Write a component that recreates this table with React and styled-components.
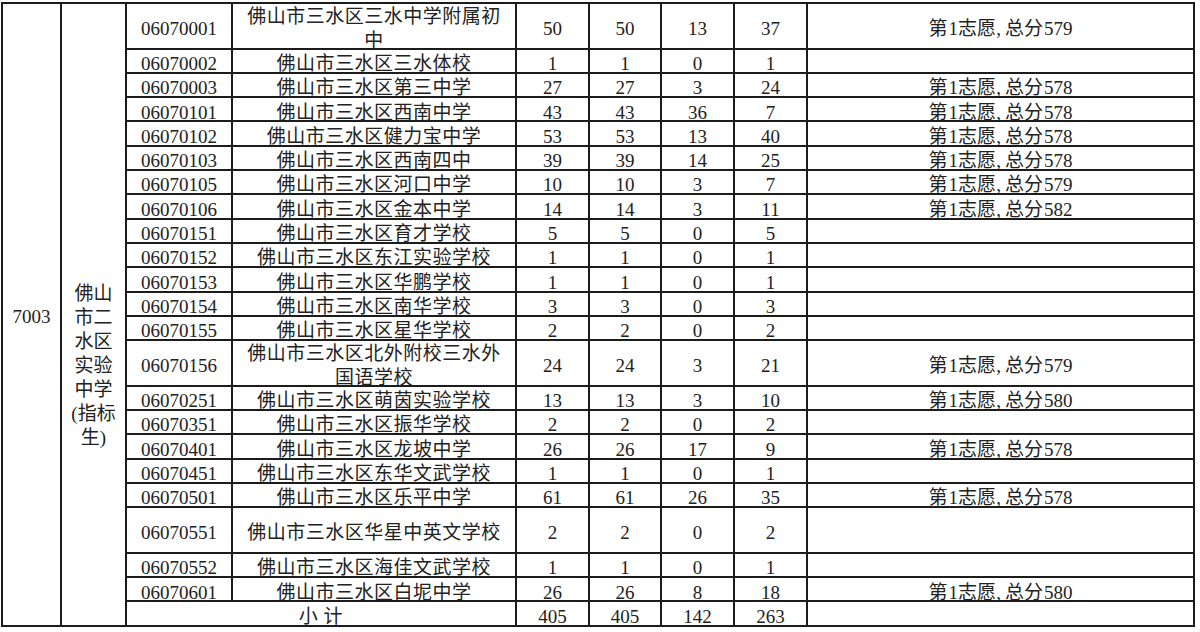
import React from "react";
import styled, { createGlobalStyle } from "styled-components";

const Global = createGlobalStyle`
  html, body { margin: 0; padding: 0; background: #ffffff; }
  body {
    font-family: "Liberation Serif", "Noto Sans CJK SC", serif;
    color: #222;
  }
`;

const SINGLE = 22.31;
const DOUBLE = 43.6;

const rows = [
  ["06070001", ["佛山市三水区三水中学附属初", "中"], 50, 50, 13, 37, "第1志愿,总分579", true],
  ["06070002", ["佛山市三水区三水体校"], 1, 1, 0, 1, ""],
  ["06070003", ["佛山市三水区第三中学"], 27, 27, 3, 24, "第1志愿,总分578"],
  ["06070101", ["佛山市三水区西南中学"], 43, 43, 36, 7, "第1志愿,总分578"],
  ["06070102", ["佛山市三水区健力宝中学"], 53, 53, 13, 40, "第1志愿,总分578"],
  ["06070103", ["佛山市三水区西南四中"], 39, 39, 14, 25, "第1志愿,总分578"],
  ["06070105", ["佛山市三水区河口中学"], 10, 10, 3, 7, "第1志愿,总分579"],
  ["06070106", ["佛山市三水区金本中学"], 14, 14, 3, 11, "第1志愿,总分582"],
  ["06070151", ["佛山市三水区育才学校"], 5, 5, 0, 5, ""],
  ["06070152", ["佛山市三水区东江实验学校"], 1, 1, 0, 1, ""],
  ["06070153", ["佛山市三水区华鹏学校"], 1, 1, 0, 1, ""],
  ["06070154", ["佛山市三水区南华学校"], 3, 3, 0, 3, ""],
  ["06070155", ["佛山市三水区星华学校"], 2, 2, 0, 2, ""],
  ["06070156", ["佛山市三水区北外附校三水外", "国语学校"], 24, 24, 3, 21, "第1志愿,总分579", true],
  ["06070251", ["佛山市三水区萌茵实验学校"], 13, 13, 3, 10, "第1志愿,总分580"],
  ["06070351", ["佛山市三水区振华学校"], 2, 2, 0, 2, ""],
  ["06070401", ["佛山市三水区龙坡中学"], 26, 26, 17, 9, "第1志愿,总分578"],
  ["06070451", ["佛山市三水区东华文武学校"], 1, 1, 0, 1, ""],
  ["06070501", ["佛山市三水区乐平中学"], 61, 61, 26, 35, "第1志愿,总分578"],
  ["06070551", ["佛山市三水区华星中英文学校"], 2, 2, 0, 2, "", true],
  ["06070552", ["佛山市三水区海佳文武学校"], 1, 1, 0, 1, ""],
  ["06070601", ["佛山市三水区白坭中学"], 26, 26, 8, 18, "第1志愿,总分580"],
];

const schoolLines = ["佛山", "市二", "水区", "实验", "中学", "(指标", "生)"];

const rowTracks = [...rows.map((r) => (r[7] ? DOUBLE : SINGLE)), SINGLE]
  .map((h) => `${h}px`)
  .join(" ");

const Sheet = styled.div`
  display: grid;
  grid-template-columns: 57px 63px 104px 282px 71px 70px 71px 71px 385px;
  grid-template-rows: ${rowTracks};
  gap: 2px;
  padding: 2px;
  background: #1c1c1c;
  width: fit-content;
  margin: 2px 0 0 1px;
`;

const Cell = styled.div`
  background: #fff;
  display: flex;
  flex-direction: column;
  align-items: center;
  justify-content: center;
  text-align: center;
  font-size: 19px;
  line-height: 23.5px;
  padding-top: 6px;
  box-sizing: border-box;
  white-space: nowrap;
  letter-spacing: ${(p) => (p.$spaced ? "0.5px" : "0")};
  grid-column: ${(p) => p.$col || "auto"};
  grid-row: ${(p) => p.$row || "auto"};
`;

const MergedCell = styled(Cell)`
  padding-top: ${(p) => p.$shift}px;
  line-height: 24px;
`;

const Line = styled.span`
  display: block;
`;

const Latin = styled.span`
  font-family: "Liberation Serif", serif;
  margin: ${(p) => (p.$comma ? "0 4px 0 0" : "0 0 0 1px")};
`;

function Note({ text }) {
  if (!text) return null;
  const parts = text.split(/(\d+|,)/).filter(Boolean);
  return (
    <Line>
      {parts.map((p, i) =>
        /^(\d+|,)$/.test(p) ? (
          <Latin key={i} $comma={p === ","}>
            {p}
          </Latin>
        ) : (
          <React.Fragment key={i}>{p}</React.Fragment>
        )
      )}
    </Line>
  );
}

export default function App() {
  const total = rows.length + 1;
  return (
    <>
      <Global />
      <Sheet>
        <MergedCell $col="1" $row={`1 / span ${total}`} $shift={6}>
          7003
        </MergedCell>
        <MergedCell $col="2" $row={`1 / span ${total}`} $shift={104}>
          {schoolLines.map((l) => (
            <Line key={l}>{l}</Line>
          ))}
        </MergedCell>
        {rows.map((r, i) => (
          <React.Fragment key={r[0]}>
            <Cell $col="3" $row={i + 1}>{r[0]}</Cell>
            <Cell $col="4" $row={i + 1} $spaced>
              {r[1].map((l) => (
                <Line key={l}>{l}</Line>
              ))}
            </Cell>
            <Cell $col="5" $row={i + 1}>{r[2]}</Cell>
            <Cell $col="6" $row={i + 1}>{r[3]}</Cell>
            <Cell $col="7" $row={i + 1}>{r[4]}</Cell>
            <Cell $col="8" $row={i + 1}>{r[5]}</Cell>
            <Cell $col="9" $row={i + 1}>
              <Note text={r[6]} />
            </Cell>
          </React.Fragment>
        ))}
        <Cell $col="3 / span 2" $row={total} $spaced>
          小 计
        </Cell>
        <Cell $col="5" $row={total}>405</Cell>
        <Cell $col="6" $row={total}>405</Cell>
        <Cell $col="7" $row={total}>142</Cell>
        <Cell $col="8" $row={total}>263</Cell>
        <Cell $col="9" $row={total}></Cell>
      </Sheet>
    </>
  );
}
